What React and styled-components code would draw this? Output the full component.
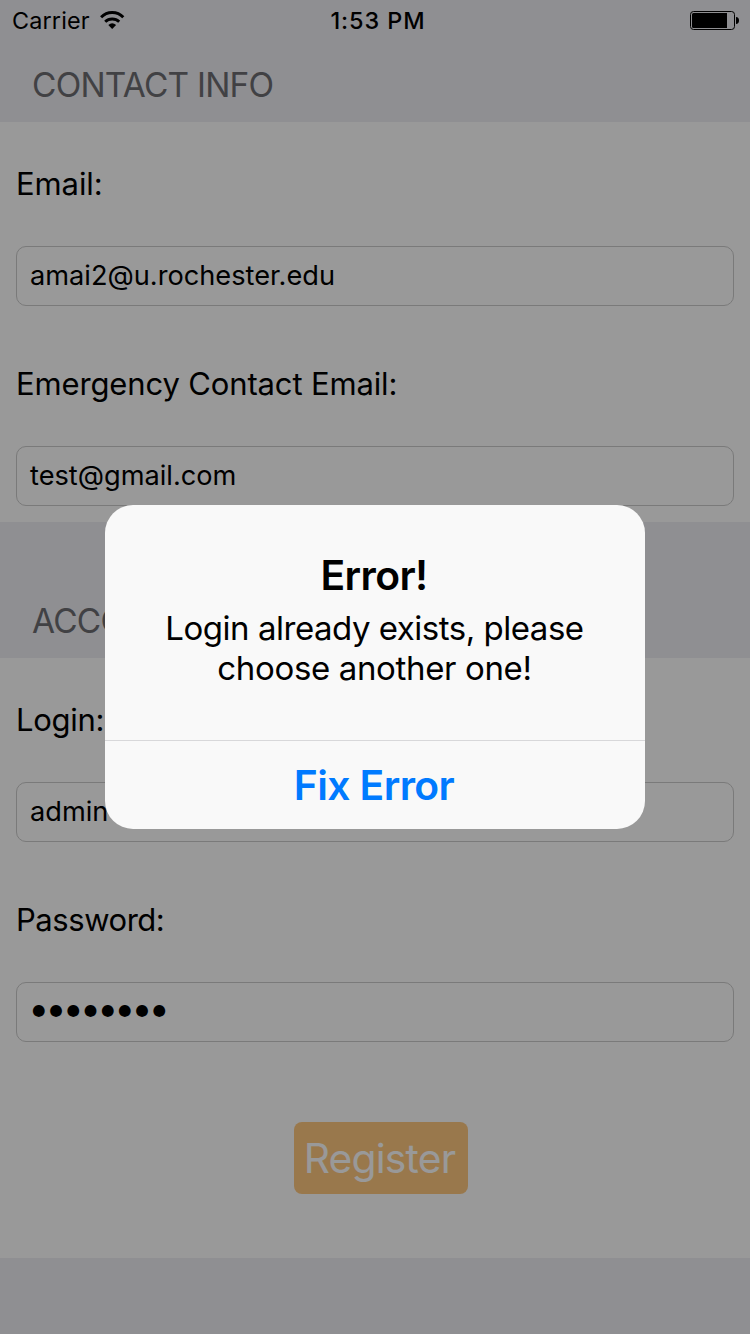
import React from "react";
import styled, { createGlobalStyle } from "styled-components";

const GlobalStyle = createGlobalStyle`
  * { box-sizing: border-box; }
  body {
    margin: 0;
    background: #efeff4;
    font-family: Inter, "Liberation Sans", sans-serif;
    color: #000;
  }
`;

const Screen = styled.div`
  position: relative;
  width: 750px;
  height: 1334px;
  overflow: hidden;
  background: #efeff4;
`;

const StatusBar = styled.header`
  display: grid;
  grid-template-columns: 1fr auto 1fr;
  align-items: center;
  height: 40px;
  padding: 0 11px 0 12px;
`;

const Carrier = styled.div`
  display: flex;
  align-items: center;
  gap: 10px;
  height: 40px;
`;

const CarrierName = styled.span`
  height: 40px;
  font-size: 23.4px;
  line-height: 42px;
  letter-spacing: 0.15px;
`;

const Clock = styled.time`
  height: 40px;
  margin-left: 5px;
  font-size: 23.4px;
  font-weight: 500;
  line-height: 42px;
  letter-spacing: 0.95px;
`;

const BatterySlot = styled.div`
  display: flex;
  justify-content: flex-end;
`;

const SectionHeader = styled.h2`
  display: flex;
  align-items: flex-end;
  height: ${(p) => p.$height}px;
  margin: 0;
  padding: 0 32px 17px;
  font-size: 33.4px;
  font-weight: 400;
  line-height: 40px;
  letter-spacing: -0.76px;
  color: #6d6d72;
`;

const Form = styled.section`
  background: #fff;
`;

const Field = styled.label`
  display: block;
  height: 200px;
  padding: 0 16px 16px;
`;

const FieldLabel = styled.span`
  display: block;
  font-size: 31px;
  line-height: 124px;
  letter-spacing: ${(p) => p.$tracking || 0}px;
`;

const FieldBox = styled.span`
  display: block;
  height: 60px;
  padding-left: 13px;
  border: 1px solid #cbcbcb;
  border-radius: 10px;
  font-size: 27.2px;
  line-height: 58px;
`;

const Mask = styled.span`
  display: block;
  height: 54px;
  padding-left: 2px;
  font-family: "DejaVu Sans", sans-serif;
  font-size: 15.5px;
  line-height: 54px;
  letter-spacing: 3.7px;
`;

const Actions = styled.div`
  display: flex;
  align-items: center;
  justify-content: center;
  height: 200px;
  padding-left: 12px;
`;

const RegisterButton = styled.button`
  width: 174px;
  height: 72px;
  padding: 0 3px 0 0;
  border: 0;
  border-radius: 8px;
  background: #ffc87f;
  color: #fff;
  font: 400 40.8px/72px Inter, sans-serif;
  letter-spacing: -0.8px;
`;

const Backdrop = styled.div`
  position: absolute;
  inset: 0;
  display: flex;
  align-items: center;
  justify-content: center;
  background: rgba(0, 0, 0, 0.4);
`;

const Alert = styled.div`
  width: 540px;
  height: 324px;
  border-radius: 28px;
  background: #f9f9f9;
  text-align: center;
`;

const AlertBody = styled.div`
  height: 235px;
  padding-top: 45px;
`;

const AlertTitle = styled.h1`
  margin: 0 0 8px;
  padding-right: 2px;
  font-size: 40.8px;
  font-weight: 600;
  line-height: 50px;
  letter-spacing: -0.6px;
`;

const AlertMessage = styled.p`
  margin: 0;
  padding-right: 1px;
  font-size: 33px;
  line-height: 40px;
`;

const MessageLine = styled.span`
  display: block;
  letter-spacing: ${(p) => p.$tracking}px;
`;

const AlertButton = styled.button`
  display: block;
  width: 100%;
  height: 89px;
  padding: 0 2px 0 0;
  border: 0;
  border-top: 1px solid #d8d8da;
  background: none;
  color: #007aff;
  font: 600 40.8px/88px Inter, sans-serif;
  letter-spacing: -0.6px;
`;

const WifiIcon = () => (
  <svg width="25" height="18" viewBox="0 0 25 18" fill="none" stroke="#000">
    <path d="M1.1 6.3A15.4 15.4 0 0 1 23.3 6.3" strokeWidth="2.9" />
    <path d="M5.2 10.8A10 10 0 0 1 19.2 10.8" strokeWidth="2.9" />
    <path d="M8.3 14.1Q12.2 10.2 16.1 14.1L12.2 18Z" fill="#000" stroke="none" />
  </svg>
);

const BatteryIcon = () => (
  <svg width="49" height="19" viewBox="0 0 49 19">
    <rect x="0.5" y="0.5" width="44" height="18" rx="3" fill="none" stroke="#000" />
    <path d="M3.5 2H37V17H3.5Q2 17 2 15.5V3.5Q2 2 3.5 2Z" />
    <path d="M46 6Q49 6.4 49 9.5T46 13Z" />
  </svg>
);

export default function App() {
  return (
    <>
      <GlobalStyle />
      <Screen>
        <StatusBar>
          <Carrier>
            <CarrierName>Carrier</CarrierName>
            <WifiIcon />
          </Carrier>
          <Clock>1:53 PM</Clock>
          <BatterySlot>
            <BatteryIcon />
          </BatterySlot>
        </StatusBar>
        <SectionHeader $height={82}>CONTACT INFO</SectionHeader>
        <Form>
          <Field>
            <FieldLabel $tracking={-0.1}>Email:</FieldLabel>
            <FieldBox>amai2@u.rochester.edu</FieldBox>
          </Field>
          <Field>
            <FieldLabel $tracking={-0.14}>Emergency Contact Email:</FieldLabel>
            <FieldBox>test@gmail.com</FieldBox>
          </Field>
        </Form>
        <SectionHeader $height={136}>ACCOUNT INFO</SectionHeader>
        <Form>
          <Field>
            <FieldLabel $tracking={-0.3}>Login:</FieldLabel>
            <FieldBox>admin</FieldBox>
          </Field>
          <Field>
            <FieldLabel $tracking={-0.45}>Password:</FieldLabel>
            <FieldBox>
              <Mask>●●●●●●●●</Mask>
            </FieldBox>
          </Field>
          <Actions>
            <RegisterButton>Register</RegisterButton>
          </Actions>
        </Form>
        <Backdrop>
          <Alert role="alertdialog">
            <AlertBody>
              <AlertTitle>Error!</AlertTitle>
              <AlertMessage>
                <MessageLine $tracking={-0.48}>Login already exists, please</MessageLine>
                <MessageLine $tracking={-0.35}>choose another one!</MessageLine>
              </AlertMessage>
            </AlertBody>
            <AlertButton>Fix Error</AlertButton>
          </Alert>
        </Backdrop>
      </Screen>
    </>
  );
}
